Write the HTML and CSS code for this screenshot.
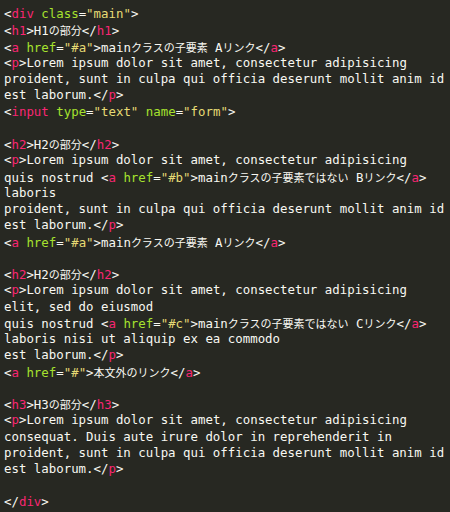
FILE: index.html
```html
<!DOCTYPE html>
<html lang="ja">
<head>
<meta charset="utf-8">
<title>code</title>
<link rel="stylesheet" href="styles.css">
</head>
<body>
<div class="code">
<div class="line">&lt;<span class="t">div</span> <span class="at">class</span>=<span class="s">"main"</span>&gt;</div>
<div class="line">&lt;<span class="t">h1</span>&gt;H1<span class="ja">の部分</span>&lt;/<span class="t">h1</span>&gt;</div>
<div class="line">&lt;<span class="t">a</span> <span class="at">href</span>=<span class="s">"#a"</span>&gt;main<span class="ja">クラスの子要素</span> A<span class="ja">リンク</span>&lt;/<span class="t">a</span>&gt;</div>
<div class="line">&lt;<span class="t">p</span>&gt;Lorem ipsum dolor sit amet, consectetur adipisicing</div>
<div class="line">proident, sunt in culpa qui officia deserunt mollit anim id</div>
<div class="line">est laborum.&lt;/<span class="t">p</span>&gt;</div>
<div class="line">&lt;<span class="t">input</span> <span class="at">type</span>=<span class="s">"text"</span> <span class="at">name</span>=<span class="s">"form"</span>&gt;</div>
<div class="line"> </div>
<div class="line">&lt;<span class="t">h2</span>&gt;H2<span class="ja">の部分</span>&lt;/<span class="t">h2</span>&gt;</div>
<div class="line">&lt;<span class="t">p</span>&gt;Lorem ipsum dolor sit amet, consectetur adipisicing</div>
<div class="line">quis nostrud &lt;<span class="t">a</span> <span class="at">href</span>=<span class="s">"#b"</span>&gt;main<span class="ja">クラスの子要素ではない</span> B<span class="ja">リンク</span>&lt;/<span class="t">a</span>&gt;</div>
<div class="line">laboris</div>
<div class="line">proident, sunt in culpa qui officia deserunt mollit anim id</div>
<div class="line">est laborum.&lt;/<span class="t">p</span>&gt;</div>
<div class="line">&lt;<span class="t">a</span> <span class="at">href</span>=<span class="s">"#a"</span>&gt;main<span class="ja">クラスの子要素</span> A<span class="ja">リンク</span>&lt;/<span class="t">a</span>&gt;</div>
<div class="line"> </div>
<div class="line">&lt;<span class="t">h2</span>&gt;H2<span class="ja">の部分</span>&lt;/<span class="t">h2</span>&gt;</div>
<div class="line">&lt;<span class="t">p</span>&gt;Lorem ipsum dolor sit amet, consectetur adipisicing</div>
<div class="line">elit, sed do eiusmod</div>
<div class="line">quis nostrud &lt;<span class="t">a</span> <span class="at">href</span>=<span class="s">"#c"</span>&gt;main<span class="ja">クラスの子要素ではない</span> C<span class="ja">リンク</span>&lt;/<span class="t">a</span>&gt;</div>
<div class="line">laboris nisi ut aliquip ex ea commodo</div>
<div class="line">est laborum.&lt;/<span class="t">p</span>&gt;</div>
<div class="line">&lt;<span class="t">a</span> <span class="at">href</span>=<span class="s">"#"</span>&gt;<span class="ja">本文外のリンク</span>&lt;/<span class="t">a</span>&gt;</div>
<div class="line"> </div>
<div class="line">&lt;<span class="t">h3</span>&gt;H3<span class="ja">の部分</span>&lt;/<span class="t">h3</span>&gt;</div>
<div class="line">&lt;<span class="t">p</span>&gt;Lorem ipsum dolor sit amet, consectetur adipisicing</div>
<div class="line">consequat. Duis aute irure dolor in reprehenderit in</div>
<div class="line">proident, sunt in culpa qui officia deserunt mollit anim id</div>
<div class="line">est laborum.&lt;/<span class="t">p</span>&gt;</div>
<div class="line"> </div>
<div class="line">&lt;/<span class="t">div</span>&gt;</div>
</div>
</body>
</html>
```
FILE: styles.css
```css
html, body {
  margin: 0;
  padding: 0;
  background: #272822;
}
.code {
  padding: 6px 0 0 4px;
  font-family: "DejaVu Sans Mono", "Noto Sans CJK JP", monospace;
  font-size: 12.4px;
  line-height: 16.25px;
  color: #f8f8f2;
}
.line {
  white-space: pre;
  height: 16.25px;
}
.t { color: #f92672; }
.at { color: #a6e22e; }
.s { color: #e6db74; }
.ja {
  font-family: "Noto Sans CJK JP", sans-serif;
  font-size: 11px;
}
```
